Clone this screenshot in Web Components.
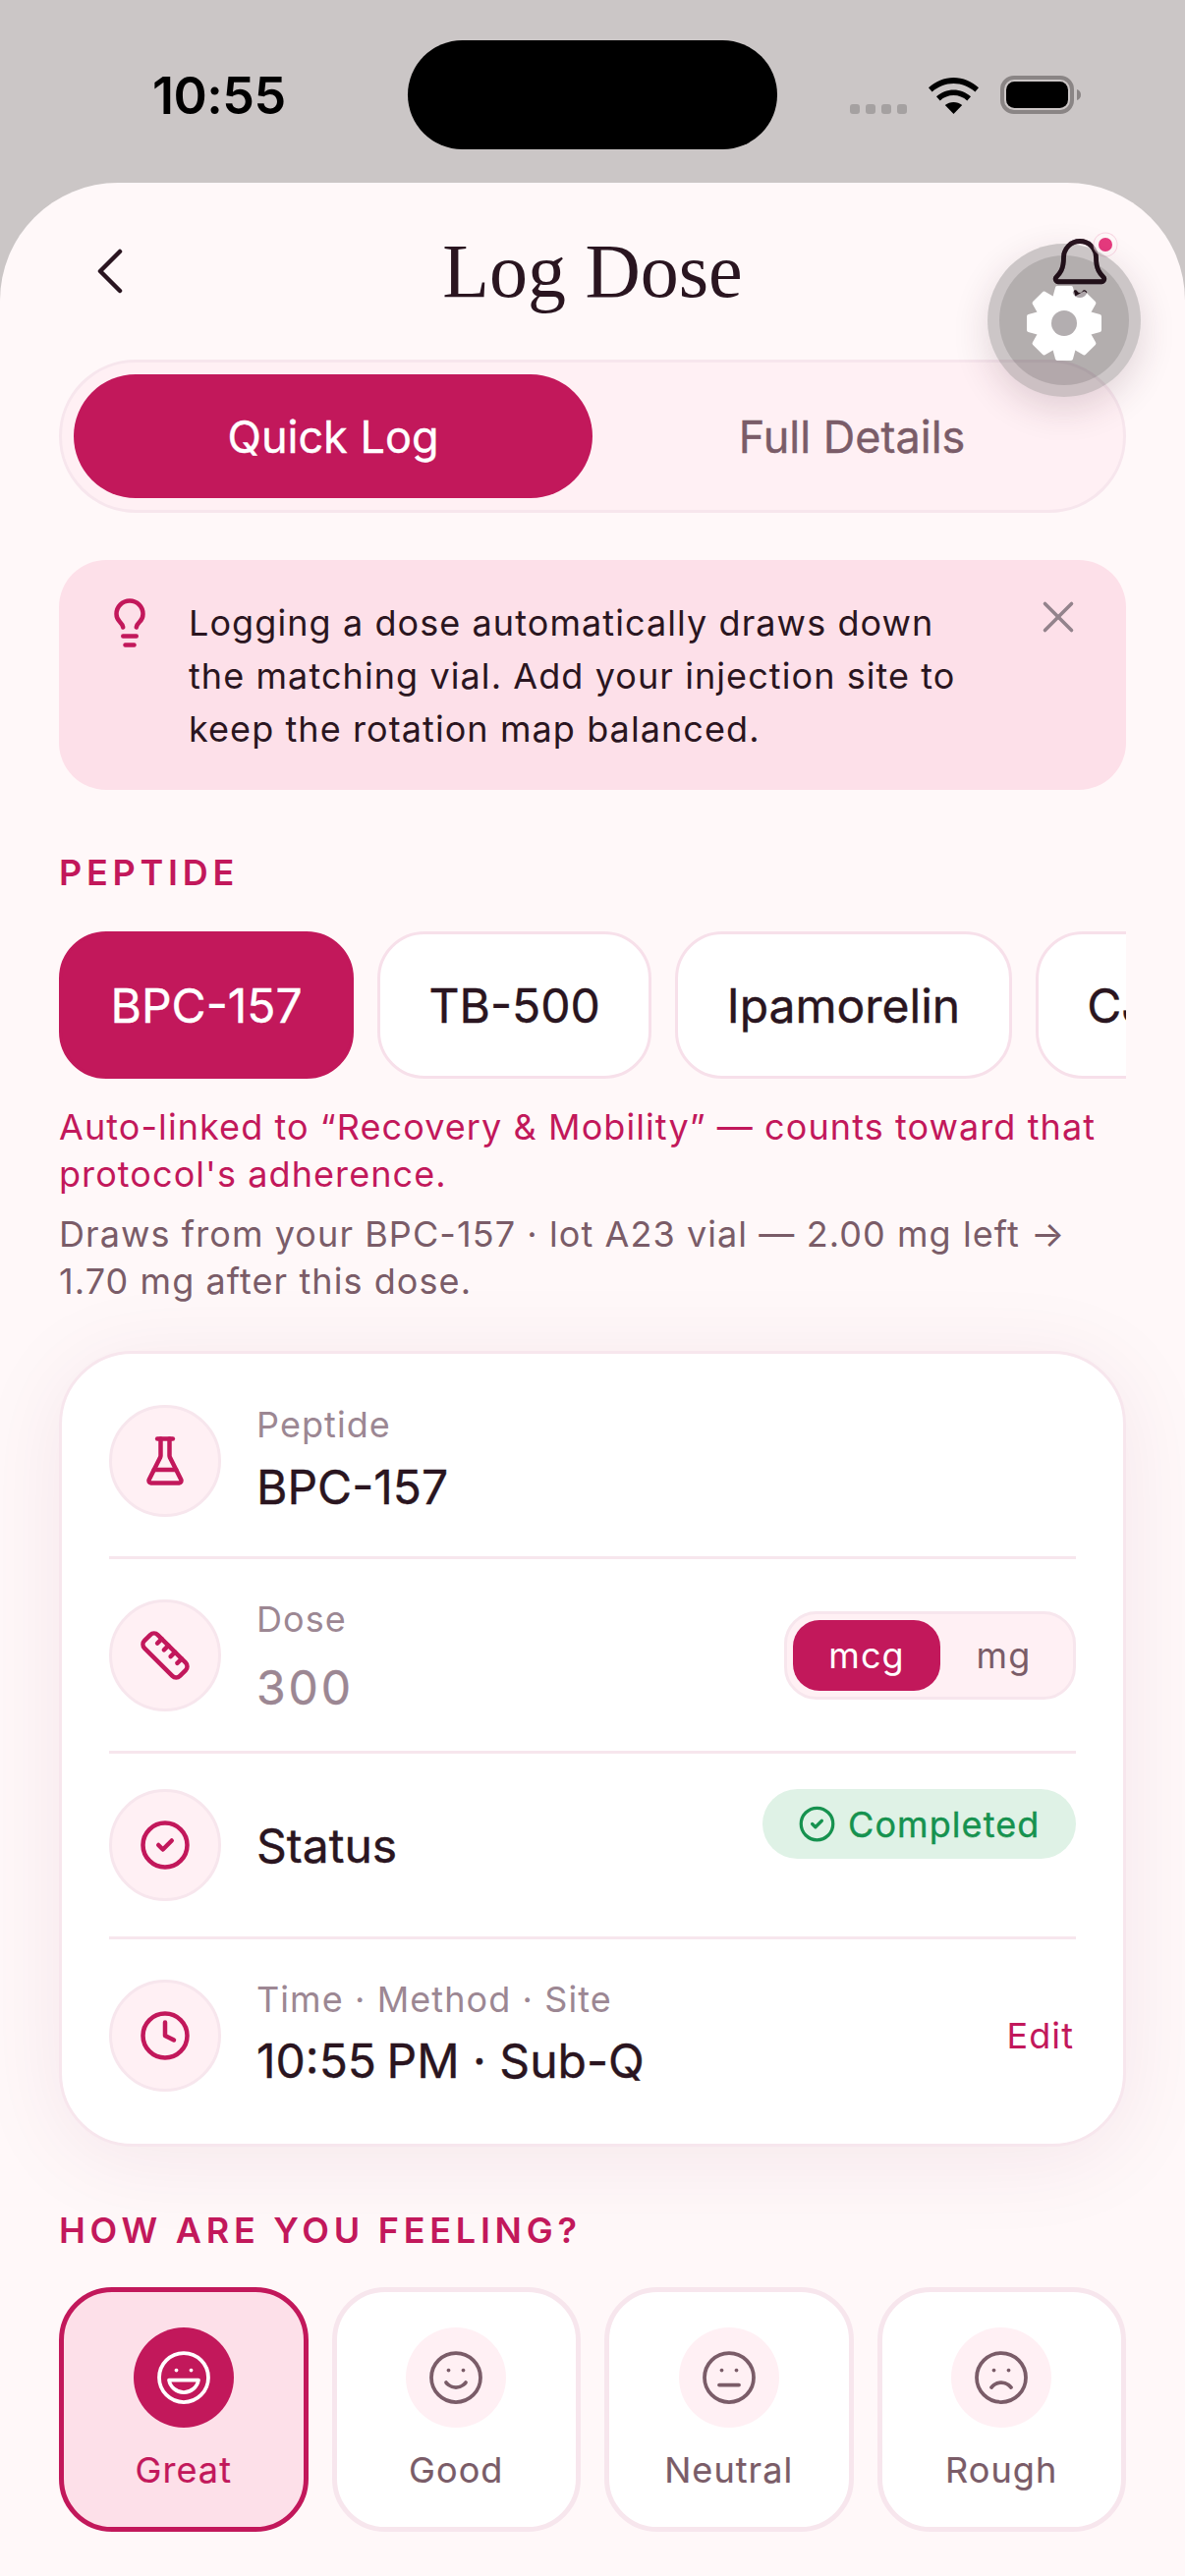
<!DOCTYPE html>
<html lang="en">
<head>
<meta charset="utf-8">
<title>Log Dose</title>
<style>
  html, body { margin: 0; height: 2622px; overflow: hidden; background: #cbc6c6; }
  body { font-family: Inter, "Liberation Sans", sans-serif; color: #2a1520; }
</style>
</head>
<body>
<dose-screen>
  <status-bar slot="status"></status-bar>

  <nav-header slot="sheet" heading="Log Dose"></nav-header>

  <segment-control slot="sheet">
    <seg-item active>Quick Log</seg-item>
    <seg-item>Full Details</seg-item>
  </segment-control>

  <info-banner slot="sheet">Logging a dose automatically draws down the matching vial. Add your injection site to keep the rotation map balanced.</info-banner>

  <section-label slot="sheet" style="--top:60px">PEPTIDE</section-label>

  <chip-row slot="sheet">
    <peptide-chip active>BPC-157</peptide-chip>
    <peptide-chip>TB-500</peptide-chip>
    <peptide-chip>Ipamorelin</peptide-chip>
    <peptide-chip>CJC-1295</peptide-chip>
  </chip-row>

  <hint-text slot="sheet" style="--color:#c2185b;--top:25px">Auto-linked to “Recovery &amp; Mobility” — counts toward that protocol's adherence.</hint-text>
  <hint-text slot="sheet" style="--color:#7a5c68;--top:13px">Draws from your BPC-157 · lot A23 vial — 2.00 mg left → 1.70 mg after this dose.</hint-text>

  <form-card slot="sheet">
    <form-row icon="flask" label="Peptide" style="--pt:52px;--pb:40px;--gap:10.500px;--shift:-2px">
      <span slot="value">BPC-157</span>
    </form-row>
    <form-row icon="ruler" label="Dose" style="--pt:41px;--pb:40px;--gap:15.500px;--shift:1px;--value:#9c8793;--track:.06em">
      <span slot="value">300</span>
      <unit-toggle slot="end"></unit-toggle>
    </form-row>
    <form-row icon="check" style="--pt:36px;--pb:36px;--shift:.500px;--end-self:flex-start">
      <span slot="value">Status</span>
      <status-pill slot="end">Completed</status-pill>
    </form-row>
    <form-row icon="clock" label="Time · Method · Site" last style="--pt:41px;--pb:53px;--gap:9.500px;--shift:-2.500px">
      <span slot="value">10:55<span style="margin-left:-3px"> </span>PM · Sub-Q</span>
      <edit-link slot="end">Edit</edit-link>
    </form-row>
  </form-card>

  <section-label slot="sheet" style="--top:61px">HOW ARE YOU FEELING?</section-label>

  <mood-grid slot="sheet">
    <mood-card icon="laugh" active>Great</mood-card>
    <mood-card icon="smile">Good</mood-card>
    <mood-card icon="meh">Neutral</mood-card>
    <mood-card icon="frown">Rough</mood-card>
  </mood-grid>
</dose-screen>

<script>
function mount(host, css, html) {
  const root = host.attachShadow({ mode: 'open' });
  const template = document.createElement('template');
  template.innerHTML = `<style>${css}</style>${html}`;
  root.appendChild(template.content.cloneNode(true));
  return root;
}

// lucide style strokes, 24 unit box
const ICONS = {
  back: '<path d="m15 18-6-6 6-6"/>',
  bulb: '<path d="M15 14c.2-1 .7-1.7 1.5-2.5 1-.9 1.5-2.2 1.5-3.5A6 6 0 0 0 6 8c0 1 .2 2.2 1.5 3.5.7.7 1.3 1.5 1.5 2.5"/><path d="M9 18h6"/><path d="M10 22h4"/>',
  close: '<path d="M18 6 6 18"/><path d="m6 6 12 12"/>',
  bell: '<path d="M10.268 21a2 2 0 0 0 3.464 0"/><path d="M3.262 15.326A1 1 0 0 0 4 17h16a1 1 0 0 0 .74-1.673C19.41 13.956 18 12.499 18 8A6 6 0 0 0 6 8c0 4.499-1.411 5.956-2.738 7.326"/>',
  flask: '<path d="M10 2v7.527a2 2 0 0 1-.211.896L4.72 20.55a1 1 0 0 0 .9 1.45h12.76a1 1 0 0 0 .9-1.45l-5.069-10.127A2 2 0 0 1 14 9.527V2"/><path d="M8.5 2h7"/><path d="M7 16h10"/>',
  ruler: '<path d="M21.3 15.3a2.4 2.4 0 0 1 0 3.4l-2.6 2.6a2.4 2.4 0 0 1-3.4 0L2.7 8.7a2.41 2.41 0 0 1 0-3.4l2.6-2.6a2.41 2.41 0 0 1 3.4 0Z"/><path d="m14.5 12.5 2-2"/><path d="m11.5 9.5 2-2"/><path d="m8.5 6.5 2-2"/><path d="m17.5 15.5 2-2"/>',
  check: '<circle cx="12" cy="12" r="10"/><path d="m9 12 2 2 4-4"/>',
  clock: '<circle cx="12" cy="12" r="10"/><path d="M12 6v6l4 2"/>',
  laugh: '<circle cx="12" cy="12" r="10"/><path d="M18 13a6 6 0 0 1-6 5 6 6 0 0 1-6-5h12Z"/><path d="M9 9h.01"/><path d="M15 9h.01"/>',
  smile: '<circle cx="12" cy="12" r="10"/><path d="M8 14s1.5 2 4 2 4-2 4-2"/><path d="M9 9h.01"/><path d="M15 9h.01"/>',
  meh: '<circle cx="12" cy="12" r="10"/><path d="M8 15h8"/><path d="M9 9h.01"/><path d="M15 9h.01"/>',
  frown: '<circle cx="12" cy="12" r="10"/><path d="M16 16s-1.5-2-4-2-4 2-4 2"/><path d="M9 9h.01"/><path d="M15 9h.01"/>'
};

function icon(name, size, stroke) {
  return `<svg width="${size}" height="${size}" viewBox="0 0 24 24" fill="none" stroke="currentColor" stroke-width="${stroke}" stroke-linecap="round" stroke-linejoin="round">${ICONS[name]}</svg>`;
}

class DoseScreen extends HTMLElement {
  constructor() {
    super();
    mount(this, `
      :host { display: flex; flex-direction: column; height: 2622px; overflow: hidden; background: #cbc6c6; }
      .sheet { flex: 1; min-height: 0; background: #fff8f9; border-radius: 120px 120px 0 0; padding: 0 60px; }
    `, `<slot name="status"></slot><main class="sheet"><slot name="sheet"></slot></main>`);
  }
}

class StatusBar extends HTMLElement {
  constructor() {
    super();
    mount(this, `
      :host { display: block; height: 186px; color: #000; }
      .row { display: flex; align-items: flex-start; height: 186px; box-sizing: border-box; padding: 41px 0 0 155px; }
      .time { flex: none; width: 260px; margin-top: 27px; font-size: 52px; line-height: 60px; font-weight: 600; letter-spacing: -.01em; }
      .island { flex: none; width: 376px; height: 111px; border-radius: 56px; background: #000; }
      .icons { flex: none; display: flex; align-items: flex-end; margin-left: 74px; margin-top: 37px; height: 38px; }
      .dots { display: flex; gap: 6px; margin-right: 22px; }
      .dots i { width: 10px; height: 10px; border-radius: 3px; background: #a5a1a1; }
      .wifi { margin-right: 22px; margin-bottom: 0; }
      svg { display: block; }
    `, `
      <div class="row">
        <span class="time">10:55</span>
        <div class="island"></div>
        <div class="icons">
          <div class="dots"><i></i><i></i><i></i><i></i></div>
          <svg class="wifi" width="51" height="37" viewBox="0 0 51 37"><path fill="#000" d="M25.5 0C35 0 44 3.8 51 10.200l-3.600 4.200C41.300 9 33.600 5.900 25.500 5.900S9.700 9 3.600 14.400L0 10.200C7 3.800 16 0 25.500 0Z"/><path fill="#000" d="M25.500 12.400c6.500 0 12.700 2.400 17.500 6.800l-3.700 4.200c-3.800-3.400-8.700-5.300-13.800-5.300s-10 1.900-13.800 5.300L8 19.200c4.800-4.400 11-6.800 17.500-6.800Z"/><path fill="#000" d="M25.500 25c3.200 0 6.200 1.100 8.700 3.100L25.500 37l-8.700-8.900c2.500-2 5.500-3.100 8.700-3.100Z"/></svg>
          <svg width="82" height="39" viewBox="0 0 82 39"><rect x="2" y="2" width="71" height="35" rx="12" fill="none" stroke="#8a8585" stroke-width="4"/><rect x="6" y="6" width="63" height="27" rx="8.500" fill="#000"/><path d="M78 14c2.500.6 4 2.800 4 5.500S80.500 24.400 78 25Z" fill="#8a8585"/></svg>
        </div>
      </div>
    `);
  }
}

// 8 tooth cog, teeth are rotated copies
function gearSvg() {
  let teeth = '';
  for (let i = 0; i < 8; i++) {
    teeth += `<polygon points="-10,-25 -7,-36 7,-36 10,-25" fill="#fff" stroke="#fff" stroke-width="4" stroke-linejoin="round" transform="rotate(${i * 45})"/>`;
  }
  return `<svg width="80" height="80" viewBox="-40 -40 80 80"><circle r="29" fill="#fff"/>${teeth}<circle r="13" fill="#b3aeb0"/></svg>`;
}

class NavHeader extends HTMLElement {
  constructor() {
    super();
    const root = mount(this, `
      :host { display: block; position: relative; z-index: 5; height: 180px; }
      .bar { display: grid; grid-template-columns: 1fr auto 1fr; align-items: center; height: 180px; }
      .back { justify-self: start; margin-left: 12px; height: 80px; color: #2a1520; }
      .back svg { display: block; }
      h1 { margin: 0; font: 400 78px/90px "Liberation Serif", serif; color: #2a1520; }
      .bell { justify-self: end; position: relative; width: 66px; height: 66px; margin-right: 14.500px; margin-top: -6px; color: #2a1520; }
      .bell svg { display: block; }
      .dot { position: absolute; left: 52.500px; top: 2px; width: 14px; height: 14px; border-radius: 50%; background: #e63a7e; box-shadow: 0 0 0 4.500px #fff8f9, 0 0 0 5.500px #f9d5e2; }
      .fab { position: absolute; left: -60.500px; top: 8px; width: 156px; height: 156px; border-radius: 50%; background: rgba(0,0,0,.2); box-shadow: 0 12px 36px rgba(70,30,50,.16); display: grid; place-items: center; }
      .fab .inner { width: 132px; height: 132px; border-radius: 50%; background: rgba(0,0,0,.12); display: grid; place-items: center; }
      .fab svg { margin-top: 5px; margin-left: -1px; }
      .ghost { position: absolute; left: 0; top: 0; opacity: .38; }
    `, `
      <div class="bar">
        <div class="back">${icon('back', 80, 1.350)}</div>
        <h1></h1>
        <div class="bell">
          ${icon('bell', 66, 1.750)}
          <span class="dot"></span>
          <div class="fab"><div class="inner">${gearSvg()}</div></div>
          <div class="ghost">${icon('bell', 66, 1.750)}</div>
        </div>
      </div>
    `);
    root.querySelector('h1').textContent = this.getAttribute('heading');
  }
}

class SegmentControl extends HTMLElement {
  constructor() {
    super();
    mount(this, `
      :host { display: flex; height: 156px; box-sizing: border-box; padding: 12px; border: 3px solid #f7e6ed; border-radius: 78px; background: #fff0f4; }
    `, `<slot></slot>`);
  }
}

class SegItem extends HTMLElement {
  constructor() {
    super();
    mount(this, `
      :host { flex: 1; display: flex; align-items: center; justify-content: center; border-radius: 63px; font-size: 45px; font-weight: 400; -webkit-text-stroke: .4px currentColor; color: #7a5c68; }
      :host([active]) { background: #c2185b; color: #fff; }
    `, `<slot></slot>`);
  }
}

class InfoBanner extends HTMLElement {
  constructor() {
    super();
    mount(this, `
      :host { display: flex; margin-top: 48px; min-height: 234px; box-sizing: border-box; padding: 37px 0 0 45px; border-radius: 48px; background: #fde0e9; }
      .bulb { flex: none; width: 54px; height: 54px; margin-top: -.500px; color: #c2185b; }
      .text { flex: none; width: 800px; margin-left: 33px; font-size: 36px; line-height: 54px; letter-spacing: .03em; color: #2a1520; }
      .close { flex: none; width: 54px; height: 54px; margin-top: -6px; margin-left: 58px; color: #93838c; }
      svg { display: block; }
    `, `
      <div class="bulb">${icon('bulb', 54, 2)}</div>
      <div class="text"><slot></slot></div>
      <div class="close">${icon('close', 54, 1.600)}</div>
    `);
  }
}

class SectionLabel extends HTMLElement {
  constructor() {
    super();
    mount(this, `
      :host { display: block; margin-top: var(--top, 0); font-size: 36px; line-height: 48px; font-weight: 600; letter-spacing: .132em; color: #c2185b; }
    `, `<slot></slot>`);
  }
}

class ChipRow extends HTMLElement {
  constructor() {
    super();
    mount(this, `
      :host { display: flex; gap: 24px; margin-top: 36px; overflow: hidden; }
    `, `<slot></slot>`);
  }
}

class PeptideChip extends HTMLElement {
  constructor() {
    super();
    mount(this, `
      :host { flex: none; display: flex; align-items: center; height: 150px; box-sizing: border-box; padding: 0 49.500px; border: 3px solid #f7e0ea; border-radius: 48px; background: #fff; font-size: 48px; font-weight: 400; -webkit-text-stroke: .4px currentColor; color: #2a1520; }
      :host([active]) { background: #c2185b; border-color: #c2185b; color: #fff; }
    `, `<slot></slot>`);
  }
}

class HintText extends HTMLElement {
  constructor() {
    super();
    mount(this, `
      :host { display: block; margin-top: var(--top, 0); font-size: 36px; line-height: 48px; letter-spacing: .03em; color: var(--color); }
    `, `<slot></slot>`);
  }
}

class FormCard extends HTMLElement {
  constructor() {
    super();
    mount(this, `
      :host { display: block; margin-top: 47px; padding: 0 48px; border: 3px solid #f7e6ed; border-radius: 75px; background: #fff; box-shadow: 0 12px 90px rgba(120,30,70,.08); }
    `, `<slot></slot>`);
  }
}

class FormRow extends HTMLElement {
  constructor() {
    super();
    const root = mount(this, `
      :host { display: flex; align-items: center; padding: var(--pt) 0 var(--pb); border-bottom: 3px solid #f7e6ed; }
      :host([last]) { border-bottom: 0; }
      .badge { flex: none; width: 114px; height: 114px; box-sizing: border-box; display: grid; place-items: center; border: 3px solid #f7e6ed; border-radius: 50%; background: #fff0f4; color: #c2185b; }
      svg { display: block; }
      .body { flex: 1; height: 114px; margin: var(--shift, 0px) 0 calc(var(--shift, 0px) * -1) 36px; display: flex; flex-direction: column; justify-content: center; gap: var(--gap, 7px); }
      .label { flex: none; font-size: 36px; line-height: 48px; letter-spacing: .03em; color: #9c8793; }
      .label:empty { display: none; }
      .value { flex: none; font-size: 48px; line-height: 60px; font-weight: 400; -webkit-text-stroke: .4px currentColor; color: var(--value, #2a1520); letter-spacing: var(--track, 0); }
      .end { flex: none; align-self: var(--end-self, center); }
    `, `
      <div class="badge">${icon(this.getAttribute('icon'), 54, 2)}</div>
      <div class="body">
        <div class="label"></div>
        <div class="value"><slot name="value"></slot></div>
      </div>
      <div class="end"><slot name="end"></slot></div>
    `);
    root.querySelector('.label').textContent = this.getAttribute('label') || '';
  }
}

class UnitToggle extends HTMLElement {
  constructor() {
    super();
    mount(this, `
      :host { display: flex; width: 297px; height: 90px; box-sizing: border-box; padding: 6px; border: 3px solid #f7e6ed; border-radius: 33px; background: #fff0f4; font-size: 36px; font-weight: 400; color: #7a5c68; letter-spacing: .03em; }
      span { display: flex; align-items: center; justify-content: center; }
      .on { width: 150px; border-radius: 27px; background: #c2185b; color: #fff; }
      .off { flex: 1; }
    `, `<span class="on">mcg</span><span class="off">mg</span>`);
  }
}

class StatusPill extends HTMLElement {
  constructor() {
    super();
    mount(this, `
      :host { display: flex; align-items: center; gap: 12px; width: 319px; height: 71px; box-sizing: border-box; padding: 0 0 0 36px; border-radius: 36px; background: #dff2e6; font-size: 36px; font-weight: 400; -webkit-text-stroke: .4px currentColor; letter-spacing: .03em; color: #16924f; }
      svg { display: block; flex: none; }
    `, `${icon('check', 39, 2)}<slot></slot>`);
  }
}

class EditLink extends HTMLElement {
  constructor() {
    super();
    mount(this, `
      :host { display: block; margin-right: 2px; font-size: 36px; font-weight: 400; letter-spacing: .03em; color: #c2185b; }
    `, `<slot></slot>`);
  }
}

class MoodGrid extends HTMLElement {
  constructor() {
    super();
    mount(this, `
      :host { display: grid; grid-template-columns: repeat(4, 1fr); gap: 24px; margin-top: 34px; }
    `, `<slot></slot>`);
  }
}

class MoodCard extends HTMLElement {
  constructor() {
    super();
    mount(this, `
      :host { display: flex; flex-direction: column; align-items: center; height: 249px; box-sizing: border-box; padding-top: 36px; border: 5px solid #f7e6ed; border-radius: 54px; background: #fff; font-size: 36px; font-weight: 400; -webkit-text-stroke: .2px currentColor; letter-spacing: .03em; color: #7a5c68; }
      :host([active]) { border-color: #c2185b; background: #fde0e9; color: #c2185b; }
      .face { width: 102px; height: 102px; display: grid; place-items: center; border-radius: 50%; background: #fff0f4; margin-bottom: 21px; }
      :host([active]) .face { background: #c2185b; color: #fff; }
      svg { display: block; }
    `, `<div class="face">${icon(this.getAttribute('icon'), 60, 1.500)}</div><slot></slot>`);
  }
}

customElements.define('dose-screen', DoseScreen);
customElements.define('status-bar', StatusBar);
customElements.define('nav-header', NavHeader);
customElements.define('segment-control', SegmentControl);
customElements.define('seg-item', SegItem);
customElements.define('info-banner', InfoBanner);
customElements.define('section-label', SectionLabel);
customElements.define('chip-row', ChipRow);
customElements.define('peptide-chip', PeptideChip);
customElements.define('hint-text', HintText);
customElements.define('form-card', FormCard);
customElements.define('form-row', FormRow);
customElements.define('unit-toggle', UnitToggle);
customElements.define('status-pill', StatusPill);
customElements.define('edit-link', EditLink);
customElements.define('mood-grid', MoodGrid);
customElements.define('mood-card', MoodCard);
</script>
</body>
</html>
